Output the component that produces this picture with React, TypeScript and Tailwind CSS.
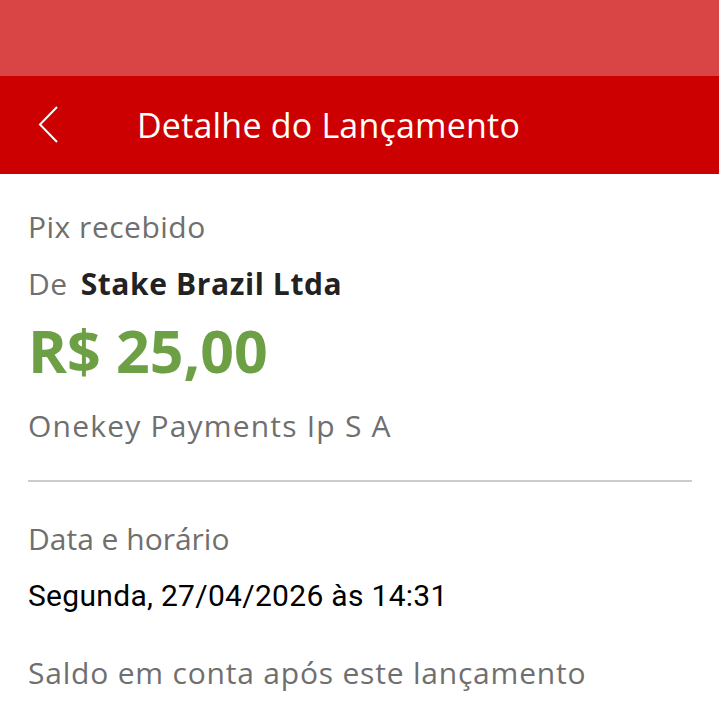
export default function App() {
  return (
    <div className="flex min-h-[717px] w-full flex-col bg-white font-['Open_Sans',sans-serif]">
      <div className="h-[76px] bg-[#d94545]" />
      <header className="flex h-[98px] items-center bg-[#cc0000] text-white">
        <svg width="22" height="40" viewBox="0 0 22 40" fill="none" className="ml-[38px]">
          <polyline points="19,2 2,19.5 19,37" stroke="white" strokeWidth="2" />
        </svg>
        <h1 className="ml-[77px] text-[34px] leading-none tracking-[0.2px]">
          Detalhe do Lançamento
        </h1>
      </header>

      <main className="flex flex-col pl-[28px] pr-[27px]">
        <p className="mt-[33px] text-[30px] leading-[40px] tracking-[0.5px] text-[#6f6f6f]">
          Pix recebido
        </p>
        <p className="mt-[17px] flex items-baseline gap-[13px] text-[30px] leading-[40px]">
          <span className="tracking-[0.5px] text-[#6f6f6f]">De</span>
          <span className="font-bold tracking-[0.6px] text-[#222222]">Stake Brazil Ltda</span>
        </p>
        <p className="mt-[10px] text-[59px] font-bold leading-[72px] text-[#6d9f45]">
          R$ 25,00
        </p>
        <p className="mt-[20px] text-[30px] leading-[40px] tracking-[1.2px] text-[#6f6f6f]">
          Onekey Payments Ip S A
        </p>

        <hr className="mt-[34px] border-t-2 border-[#cccccc]" />

        <p className="mt-[37px] text-[30px] leading-[40px] text-[#6f6f6f]">Data e horário</p>
        <p className="mt-[17px] font-['Roboto',sans-serif] text-[30px] leading-[40px] tracking-[0.3px] text-black">
          Segunda, 27/04/2026 às 14:31
        </p>
        <p className="mt-[37px] text-[30px] leading-[40px] tracking-[0.8px] text-[#6f6f6f]">
          Saldo em conta após este lançamento
        </p>
      </main>
    </div>
  )
}
